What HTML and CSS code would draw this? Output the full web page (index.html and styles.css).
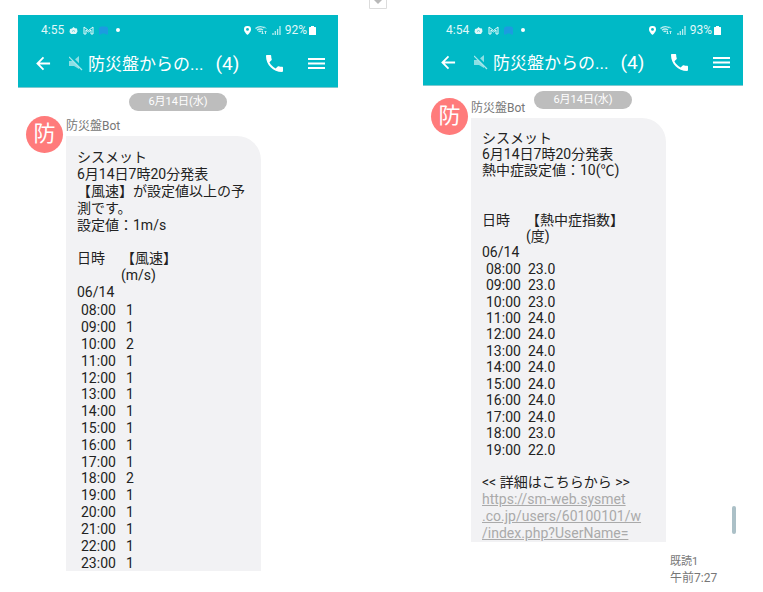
FILE: index.html
```
<!DOCTYPE html>
<html lang="ja">
	<head>
		<meta charset="UTF-8">
		<title>防災盤Bot</title>
		<link rel="stylesheet" href="styles.css">
	</head>
	<body>
		<!-- 共通アイコン -->
		<svg class="icons" aria-hidden="true">
			<symbol id="cloud" viewBox="0 0 9 9"><path d="M1 3l2-.5L4.500 1l1.500 1.300L8 2.500l.5 3L7 8H2L.5 6z" fill="#dff7f8"/><path d="M3 5.500l1.500-1L6 5.500" stroke="#5fd0d8" fill="none"/></symbol>
			<symbol id="mail" viewBox="0 0 11 9"><path d="M1 8V1l4.500 3.500L10 1v7H8V4L5.500 6 3 4v4z" fill="none" stroke="#e6fafa"/></symbol>
			<symbol id="app" viewBox="0 0 9 9"><path d="M0 8.500V3q0-2.500 2.500-2.500h4Q9 .5 9 3v5.500H7l-1-1H3l-1 1z" fill="#1c9be0"/></symbol>
			<symbol id="pin" viewBox="0 0 7 9"><path d="M3.500 0A3.400 3.400 0 0 0 0 3.500C0 6 3.500 9 3.500 9S7 6 7 3.500A3.400 3.400 0 0 0 3.500 0z" fill="#fff"/><circle cx="3.500" cy="3.400" r="1.400" fill="#00b9c6"/></symbol>
			<symbol id="wifi" viewBox="0 0 13 10"><path d="M.5 3.500Q5 0 9.500 3M2 5.200Q5 3 8 5M3.500 6.700Q5 5.700 6.500 6.700" fill="none" stroke="#bdeef1" stroke-width="1.400"/><path d="M9 1.500l2 2M7.500 6v3M6.500 8l1 1 1-1M10.500 9V6M9.500 7l1-1 1 1" fill="none" stroke="#bdeef1"/></symbol>
			<symbol id="signal" viewBox="0 0 9 9"><path d="M1 9V7M3.300 9V5M5.600 9V3M8 9V0" stroke="#b5ecef" stroke-width="1.300"/></symbol>
			<symbol id="battery" viewBox="0 0 7 9"><path d="M2 0h3v1h1.500q.5 0 .5.5v7q0 .5-.5.5h-6Q0 9 0 8.500v-7Q0 1 .5 1H2z" fill="#fff"/></symbol>
			<symbol id="back" viewBox="0 0 16 16"><path d="M15 8H2M8 1.500L1.500 8 8 14.500" fill="none" stroke="#fff" stroke-width="1.900"/></symbol>
			<symbol id="mute" viewBox="0 0 14 15"><path d="M0 5h4l6-5v13L5 10H0z" fill="#8cdfe4"/><path d="M1 0l13 13" stroke="#00b9c6" stroke-width="2.500"/><path d="M0 1l13 13" stroke="#a8e8eb" stroke-width="1.200"/></symbol>
			<symbol id="call" viewBox="3 3 18 18"><path d="M6.620 10.790c1.440 2.830 3.760 5.140 6.590 6.590l2.200-2.200c.27-.27.67-.36 1.020-.24 1.120.37 2.330.57 3.570.57.55 0 1 .45 1 1V20c0 .55-.45 1-1 1C10.610 21 3 13.390 3 4c0-.55.45-1 1-1h3.500c.55 0 1 .45 1 1 0 1.250.2 2.450.57 3.570.11.35.03.74-.25 1.020z" fill="#fff"/></symbol>
			<symbol id="menu" viewBox="0 0 17 13"><path d="M0 2h17M0 6.500h17M0 11h17" stroke="#fff" stroke-width="1.800"/></symbol>
		</svg>

		<div class="page">
			<section class="phone wind">
				<header class="head">
					<div class="status">
						<span class="clock">4:55</span>
						<svg width="9" height="9"><use href="#cloud"/></svg>
						<svg width="11" height="9"><use href="#mail"/></svg>
						<svg width="9" height="9"><use href="#app"/></svg>
						<i class="dot"></i>
						<span class="status_right">
							<svg width="7" height="9"><use href="#pin"/></svg>
							<svg width="13" height="10"><use href="#wifi"/></svg>
							<svg width="9" height="9"><use href="#signal"/></svg>
							<span class="power">92%<svg width="7" height="9"><use href="#battery"/></svg></span>
						</span>
					</div>
					<div class="bar">
						<button class="btn" aria-label="戻る"><svg width="15" height="15"><use href="#back"/></svg></button>
						<svg class="mute" width="14" height="15"><use href="#mute"/></svg>
						<h1 class="title">防災盤からの...</h1>
						<span class="count">(4)</span>
						<button class="btn call" aria-label="通話"><svg width="17" height="17"><use href="#call"/></svg></button>
						<button class="btn" aria-label="メニュー"><svg width="17" height="13"><use href="#menu"/></svg></button>
					</div>
				</header>
				<div class="date">6月14日(水)</div>
				<div class="msg">
					<div class="avatar">防</div>
					<div class="msg_body">
						<div class="name">防災盤Bot</div>
						<div class="bubble">
							<p>シスメット<br>6月14日7時20分発表<br>【風速】が設定値以上の予測です。<br>設定値：1m/s</p>
							<table class="data">
								<thead>
									<tr><th>日時</th><th>【風速】<br>(m/s)</th></tr>
								</thead>
								<tbody>
									<tr><th colspan="2">06/14</th></tr>
									<tr><td>08:00</td><td>1</td></tr>
									<tr><td>09:00</td><td>1</td></tr>
									<tr><td>10:00</td><td>2</td></tr>
									<tr><td>11:00</td><td>1</td></tr>
									<tr><td>12:00</td><td>1</td></tr>
									<tr><td>13:00</td><td>1</td></tr>
									<tr><td>14:00</td><td>1</td></tr>
									<tr><td>15:00</td><td>1</td></tr>
									<tr><td>16:00</td><td>1</td></tr>
									<tr><td>17:00</td><td>1</td></tr>
									<tr><td>18:00</td><td>2</td></tr>
									<tr><td>19:00</td><td>1</td></tr>
									<tr><td>20:00</td><td>1</td></tr>
									<tr><td>21:00</td><td>1</td></tr>
									<tr><td>22:00</td><td>1</td></tr>
									<tr><td>23:00</td><td>1</td></tr>
								</tbody>
							</table>
						</div>
					</div>
				</div>
			</section>

			<div class="anchor"><svg width="18" height="9" viewBox="0 0 18 9"><path d="M.5 0v8.500h17V0" fill="none" stroke="#dcdcdc"/><path d="M5 0h8L9 4z" fill="#b8b8b8"/></svg></div>

			<section class="phone heat">
				<header class="head">
					<div class="status">
						<span class="clock">4:54</span>
						<svg width="9" height="9"><use href="#cloud"/></svg>
						<svg width="11" height="9"><use href="#mail"/></svg>
						<svg width="9" height="9"><use href="#app"/></svg>
						<i class="dot"></i>
						<span class="status_right">
							<svg width="7" height="9"><use href="#pin"/></svg>
							<svg width="13" height="10"><use href="#wifi"/></svg>
							<svg width="9" height="9"><use href="#signal"/></svg>
							<span class="power">93%<svg width="7" height="9"><use href="#battery"/></svg></span>
						</span>
					</div>
					<div class="bar">
						<button class="btn" aria-label="戻る"><svg width="15" height="15"><use href="#back"/></svg></button>
						<svg class="mute" width="14" height="15"><use href="#mute"/></svg>
						<h1 class="title">防災盤からの...</h1>
						<span class="count">(4)</span>
						<button class="btn call" aria-label="通話"><svg width="17" height="17"><use href="#call"/></svg></button>
						<button class="btn" aria-label="メニュー"><svg width="17" height="13"><use href="#menu"/></svg></button>
					</div>
				</header>
				<div class="date">6月14日(水)</div>
				<div class="msg">
					<div class="avatar">防</div>
					<div class="msg_body">
						<div class="name">防災盤Bot</div>
						<div class="bubble">
							<p>シスメット<br>6月14日7時20分発表<br>熱中症設定値：10(℃)</p>
							<table class="data">
								<thead>
									<tr><th>日時</th><th>【熱中症指数】<br>(度)</th></tr>
								</thead>
								<tbody>
									<tr><th colspan="2">06/14</th></tr>
									<tr><td>08:00</td><td>23.0</td></tr>
									<tr><td>09:00</td><td>23.0</td></tr>
									<tr><td>10:00</td><td>23.0</td></tr>
									<tr><td>11:00</td><td>24.0</td></tr>
									<tr><td>12:00</td><td>24.0</td></tr>
									<tr><td>13:00</td><td>24.0</td></tr>
									<tr><td>14:00</td><td>24.0</td></tr>
									<tr><td>15:00</td><td>24.0</td></tr>
									<tr><td>16:00</td><td>24.0</td></tr>
									<tr><td>17:00</td><td>24.0</td></tr>
									<tr><td>18:00</td><td>23.0</td></tr>
									<tr><td>19:00</td><td>22.0</td></tr>
								</tbody>
							</table>
							<p class="more">&lt;&lt; 詳細はこちらから &gt;&gt;<br><a href="#">https://sm-web.sysmet<br>.co.jp/users/60100101/w<br>/index.php?UserName=</a></p>
						</div>
						<div class="read"><small>既読1</small><span>午前7:27</span></div>
					</div>
				</div>
				<i class="scroll"></i>
			</section>
		</div>
	</body>
</html>
```
FILE: styles.css
```
*{padding: 0;margin: 0;box-sizing: border-box;}

body{font: 14px/17px Roboto,"Noto Sans CJK JP",sans-serif;color: #222;background: #fff;}
svg{display: block;flex: none;}
.icons{position: absolute;width: 0;height: 0;}

.page{display: grid;grid-template-columns: 1fr 85px 1fr;padding: 0 20px 0 18px;}
.phone{position: relative;margin-top: 15px;min-width: 0;align-self: start;}
.anchor{padding-left: 31px;}

/* ヘッダー */
.head{background: #00b9c6;color: #fff;border-bottom: 1px solid #7fc9cf;padding-top: 5px;}
.status{display: flex;align-items: center;height: 20px;padding: 0 22px 0 23px;gap: 5px;font-size: 12px;color: #e0f8f9;}
.dot{width: 4px;height: 4px;border-radius: 50%;background: #fff;margin-left: 3px;}
.status_right{display: flex;align-items: center;gap: 4px;margin-left: auto;}
.power{display: flex;align-items: center;gap: 2px;}

.bar{display: flex;align-items: center;height: 47px;padding: 0 13px 0 18px;}
.heat .bar{height: 45px;}
.btn{border: 0;background: none;cursor: pointer;flex: none;}
.mute{margin: 0 5px 0 18px;}
.title{font-size: 17px;font-weight: 400;line-height: 24px;white-space: nowrap;}
.count{font-size: 19px;margin-left: 12px;}
.call{margin: 0 25px 0 auto;}

.date{width: 98px;height: 18px;margin: 5px auto;border-radius: 9px;background: #bdbdbd;color: #fff;font-size: 11px;line-height: 18px;text-align: center;}
.heat .date{margin-bottom: -11px;}

/* メッセージ */
.msg{display: flex;gap: 3px;padding-left: 8px;}
.avatar{flex: none;width: 37px;height: 37px;border-radius: 50%;background: #ff7b7b;color: #fff;font-size: 22px;line-height: 36px;text-align: center;}
.msg_body{flex: 1;min-width: 0;}
.name{height: 20px;font-size: 12px;line-height: 20px;color: #777;}
.bubble{width: 195px;padding: 13px 16px 0 11px;border-radius: 0 24px 0 0;background: #f2f2f4;}
.bubble a{color: #aaa;}

.data{width: 100%;height: 321px;margin-top: 16px;border-collapse: collapse;text-align: left;table-layout: fixed;white-space: nowrap;}
.data th{font-weight: 400;vertical-align: top;}
.data th:first-child{width: 44px;}
.data td{padding-left: 4px;line-height: 16px;}
.data td+td{padding-left: 5px;}

.heat .bubble{padding-top: 12px;line-height: 16px;}
.heat .data{height: 246px;margin: 34px 0 16px;}
.heat .data td+td{padding-left: 2px;}
.heat .more{line-height: 17px;}

.read{display: flex;flex-direction: column;padding: 12px 0 0 199px;font-size: 12px;line-height: 16px;color: #777;}
.read small{font-size: 11px;}

.scroll{position: absolute;right: 7px;bottom: 52px;width: 4px;height: 28px;border-radius: 2px;background: #abc0c7;}
```
